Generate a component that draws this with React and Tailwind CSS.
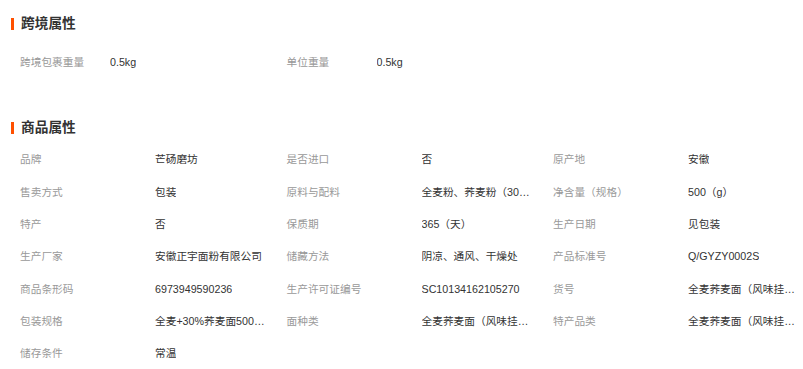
import React from "react";

const crossBorder = [
  ["跨境包裹重量", "0.5kg"],
  ["单位重量", "0.5kg"],
];

const productAttrs = [
  ["品牌", "芒砀磨坊"],
  ["是否进口", "否"],
  ["原产地", "安徽"],
  ["售卖方式", "包装"],
  ["原料与配料", "全麦粉、荞麦粉（30%）、水、食用盐"],
  ["净含量（规格）", "500（g）"],
  ["特产", "否"],
  ["保质期", "365（天）"],
  ["生产日期", "见包装"],
  ["生产厂家", "安徽正宇面粉有限公司"],
  ["储藏方法", "阴凉、通风、干燥处"],
  ["产品标准号", "Q/GYZY0002S"],
  ["商品条形码", "6973949590236"],
  ["生产许可证编号", "SC10134162105270"],
  ["货号", "全麦荞麦面（风味挂面）"],
  ["包装规格", "全麦+30%荞麦面500g*5袋"],
  ["面种类", "全麦荞麦面（风味挂面）"],
  ["特产品类", "全麦荞麦面（风味挂面）"],
  ["储存条件", "常温"],
];

function SectionTitle({ children }) {
  return (
    <div className="flex items-center h-[20px]">
      <span className="w-[3px] h-[12px] bg-[#ff5000]" />
      <span className="ml-[7px] text-[13.7px] font-bold text-[#333] leading-[20px]">
        {children}
      </span>
    </div>
  );
}

function Attr({ label, value, labelWidth }) {
  return (
    <div className="flex items-center h-[32.3px]">
      <span className="shrink-0 text-[#999]" style={{ width: labelWidth }}>
        {label}
      </span>
      <span className="max-w-[115px] truncate text-[#333]">{value}</span>
    </div>
  );
}

export default function App() {
  return (
    <div
      className="w-[803px] h-[369px] bg-white overflow-hidden pl-[11px] pt-[14px] text-[10.7px]"
      style={{ fontFamily: '"Liberation Sans", "Noto Sans CJK SC", sans-serif' }}
    >
      <SectionTitle>跨境属性</SectionTitle>
      <div className="grid grid-cols-[repeat(2,266.5px)] pl-[9px] mt-[12px]">
        {crossBorder.map(([l, v]) => (
          <Attr key={l} label={l} value={v} labelWidth={90} />
        ))}
      </div>

      <div className="mt-[40px]">
        <SectionTitle>商品属性</SectionTitle>
      </div>
      <div className="grid grid-cols-[repeat(3,266.5px)] pl-[9px] mt-[5px]">
        {productAttrs.map(([l, v]) => (
          <Attr key={l} label={l} value={v} labelWidth={135} />
        ))}
      </div>
    </div>
  );
}
